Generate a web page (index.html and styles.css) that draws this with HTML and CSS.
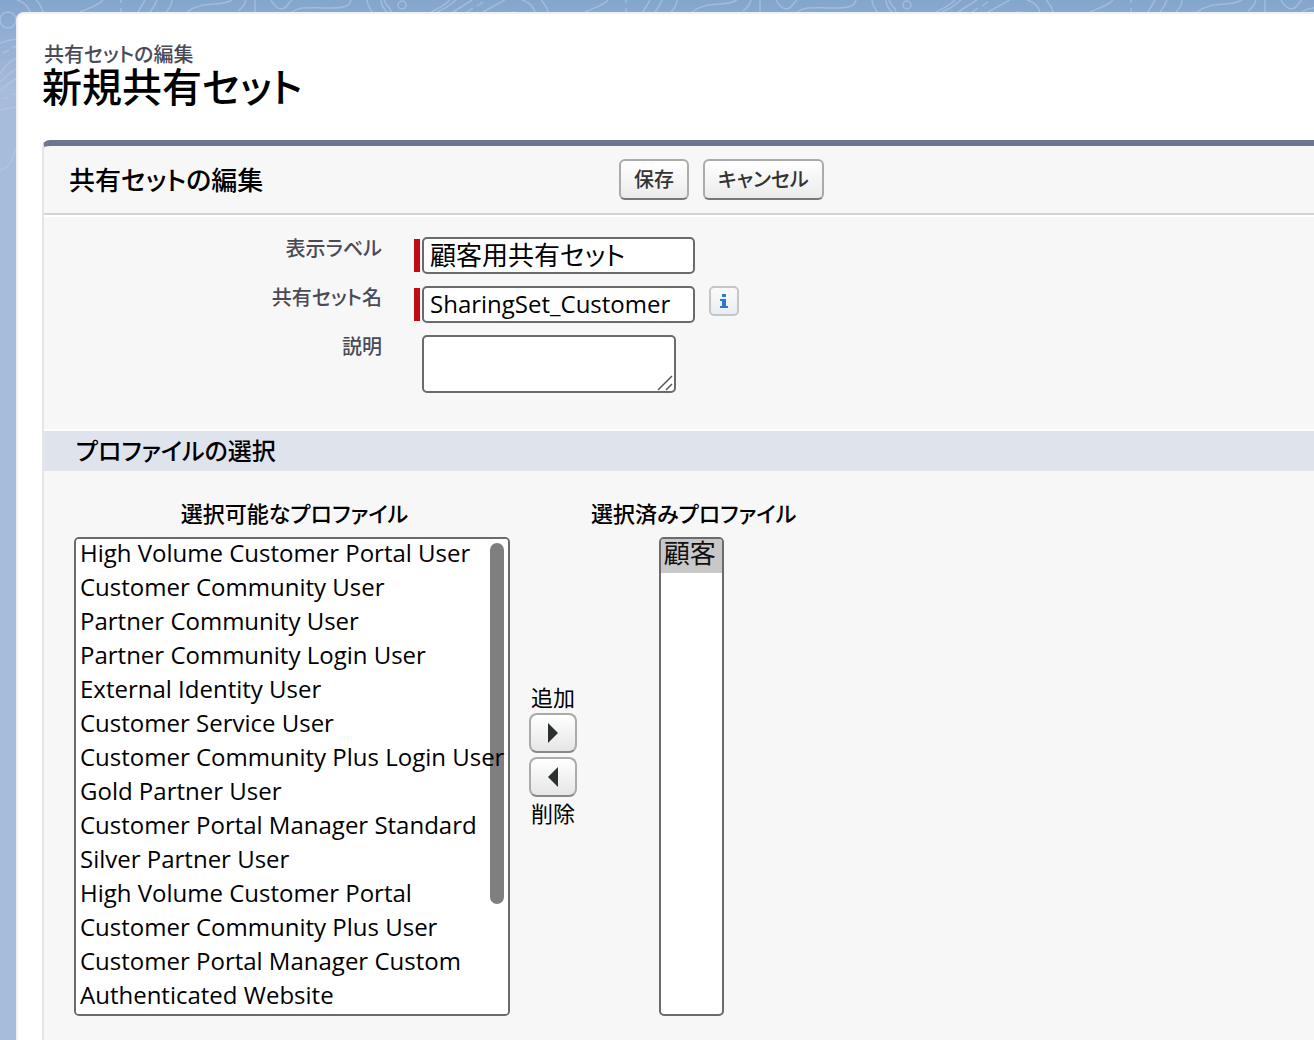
FILE: index.html
```html
<!DOCTYPE html>
<html lang="ja">
<head>
  <meta charset="utf-8">
  <meta name="viewport" content="width=device-width, initial-scale=1">
  <title>新規共有セット</title>
  <link rel="stylesheet" href="styles.css">
</head>
<body>
  <svg class="backdrop" aria-hidden="true">
    <defs>
      <pattern id="contours" width="505" height="200" patternUnits="userSpaceOnUse">
        <g fill="none" stroke="#b4cae4" stroke-opacity=".6" stroke-width="1.5">
          <path d="M17 0C24 2 28 6 30 12M36 0C40 4 42 8 43 12M80 12C88 8 98 6 103 0M121 0V3M121 8V12M138 12L145 0M150 12Q155 6 157 0M166 12Q172 6 172 0M187 12C203 0 217 8 232 0M238 11C246 5 244 4 246 0M255 0V12"/>
          <path d="M271 0C276 9 283 13 289 3L292 0M292 12C300 6 310 8 330 8C345 8 350 6 351 0M367 0C367 5 370 8 372 12M381 0C381 6 384 9 387 12M384 0C388 9 390 6 391 12"/>
          <ellipse cx="402" cy="5" rx="4" ry="4"/>
          <path d="M431 12Q444 6 450 0M437 12Q447 8 456 0M453 12L472 0M467 12L473 8M477 6L483 2M483 12L505 0"/>
          <circle cx="8" cy="20" r="8"/>
          <path d="M0 43Q8 40 17 39M3 53L9 50M12 48L17 46M0 74Q7 62 17 58M0 82Q8 74 17 68M0 91Q8 83 17 78M3 99L9 97M12 95L17 93M0 110Q8 108 17 107M0 170C12 168 12 156 17 147"/>
        </g>
      </pattern>
    </defs>
    <rect width="100%" height="200" fill="url(#contours)"/>
  </svg>

  <main class="page">
    <header class="page-title">
      <p class="page-type">共有セットの編集</p>
      <h1>新規共有セット</h1>
    </header>

    <form class="block">
      <div class="block-header">
        <h2>共有セットの編集</h2>
        <div class="actions">
          <button class="btn" type="submit">保存</button>
          <button class="btn" type="button">キャンセル</button>
        </div>
      </div>

      <div class="fields">
        <div class="field">
          <label for="label">表示ラベル</label>
          <div class="control required">
            <input class="text ja" id="label" type="text" value="顧客用共有セット">
          </div>
        </div>
        <div class="field">
          <label for="name">共有セット名</label>
          <div class="control required">
            <input class="text" id="name" type="text" value="SharingSet_Customer">
            <button class="info" type="button" aria-label="情報">
              <svg viewBox="0 0 10 16" width="10" height="16" aria-hidden="true">
                <path fill="#2a78d0" d="M3 1h4v3H3zM1 6h6v7h2v2H1v-2h2V8H1z"/>
              </svg>
            </button>
          </div>
        </div>
        <div class="field">
          <label for="description">説明</label>
          <div class="control">
            <div class="area">
              <textarea id="description"></textarea>
              <svg class="grip" viewBox="0 0 16 16" width="16" height="16" aria-hidden="true">
                <path d="M1 15L15 1M9 15L15 9" stroke="#555" stroke-width="1.5"/>
              </svg>
            </div>
          </div>
        </div>
      </div>

      <h3 class="section">プロファイルの選択</h3>

      <div class="picker">
        <div class="column available">
          <label for="available">選択可能なプロファイル</label>
          <div class="list-wrap">
            <select class="list" id="available" multiple size="14">
              <option>High Volume Customer Portal User</option>
              <option>Customer Community User</option>
              <option>Partner Community User</option>
              <option>Partner Community Login User</option>
              <option>External Identity User</option>
              <option>Customer Service User</option>
              <option>Customer Community Plus Login User</option>
              <option>Gold Partner User</option>
              <option>Customer Portal Manager Standard</option>
              <option>Silver Partner User</option>
              <option>High Volume Customer Portal</option>
              <option>Customer Community Plus User</option>
              <option>Customer Portal Manager Custom</option>
              <option>Authenticated Website</option>
            </select>
            <span class="thumb"></span>
          </div>
        </div>
        <div class="transfer">
          <span>追加</span>
          <button class="arrow" type="button" aria-label="追加">
            <svg viewBox="0 0 12 20" width="12" height="20" aria-hidden="true"><path fill="#2c302f" d="M1 0L11 10L1 20z"/></svg>
          </button>
          <button class="arrow" type="button" aria-label="削除">
            <svg viewBox="0 0 12 20" width="12" height="20" aria-hidden="true"><path fill="#2c302f" d="M11 0L1 10L11 20z"/></svg>
          </button>
          <span>削除</span>
        </div>
        <div class="column chosen">
          <label for="chosen">選択済みプロファイル</label>
          <select class="list ja" id="chosen" multiple size="14">
            <option selected>顧客</option>
          </select>
        </div>
      </div>
    </form>
  </main>
</body>
</html>
```
FILE: styles.css
```css
* {
  box-sizing: border-box;
}

body {
  margin: 0;
  padding: 12px 0 0 16px;
  min-height: 100vh;
  background: #a7bbda linear-gradient(#84a5cd, #a7bbda) 0 0 / 100% 90px no-repeat;
  font-family: "Open Sans", "Noto Sans CJK JP", sans-serif;
  font-feature-settings: "palt";
  color: #000;
}

h1, h2, h3, p {
  margin: 0;
}

button, input, select, textarea {
  font: inherit;
  font-feature-settings: inherit;
  color: inherit;
}

.backdrop {
  position: absolute;
  top: 0;
  left: 0;
  width: 100%;
  height: 200px;
}

.page {
  position: relative;
  min-height: calc(100vh - 12px);
  padding: 29px 0 0 24px;
  border: solid #f0f0f1;
  border-width: 2px 0 0 2px;
  border-radius: 8px 0 0 0;
  background: #fff;
}

.page-title {
  padding-bottom: 33px;
}

.page-type {
  padding-left: 2px;
  font-size: 20px;
  font-weight: 500;
  line-height: 24px;
  color: #4a4a56;
}

h1 {
  font-size: 40px;
  font-weight: 500;
  line-height: 40px;
}

.block {
  border: solid #e5e5e5;
  border-width: 6px 0 0 2px;
  border-top-color: #6b768f;
  border-radius: 8px 0 0 0;
  background: #f7f7f7;
}

.block-header {
  display: grid;
  grid-template-columns: 550px 1fr;
  align-items: center;
  padding: 13px 0 13px 25px;
  border-bottom: 2px solid #d4d4d4;
}

h2 {
  font-size: 26px;
  font-weight: 500;
  line-height: 40px;
}

.actions {
  display: flex;
  gap: 14px;
}

.btn {
  height: 41px;
  padding: 0 13px 2px;
  border: 2px solid #ababab;
  border-bottom-color: #777;
  border-radius: 6px;
  background: linear-gradient(#fff, #ebebeb);
  font-size: 20px;
  font-weight: 500;
  color: #333;
}

.fields {
  display: grid;
  gap: 12px;
  padding: 20px 0 36px;
  border: solid #fff;
  border-width: 2px 0;
}

.field {
  display: grid;
  grid-template-columns: 338px 1fr;
  column-gap: 40px;
}

.field label {
  text-align: right;
  font-size: 20px;
  font-weight: 500;
  line-height: 24px;
  color: #4a4a56;
}

.control {
  position: relative;
  display: flex;
  gap: 14px;
}

.required::before {
  content: "";
  position: absolute;
  left: -8px;
  top: 2px;
  bottom: 2px;
  width: 6px;
  background: #c20a14;
}

.text {
  width: 273px;
  height: 37px;
  padding: 0 6px 2px;
  border: 2px solid #6b6b6b;
  border-radius: 5px;
  background: #fff;
  font-size: 24px;
}

.text.ja {
  padding-bottom: 4px;
}

.info {
  display: grid;
  place-items: center;
  width: 30px;
  height: 30px;
  padding: 0;
  border: 2px solid #c6c6c6;
  border-radius: 5px;
  background: linear-gradient(#fbfbfb, #e9edf1);
}

.area {
  position: relative;
}

.area textarea {
  display: block;
  width: 254px;
  height: 58px;
  border: 2px solid #6b6b6b;
  border-radius: 5px;
  background: #fff;
  resize: none;
}

.grip {
  position: absolute;
  right: 3px;
  bottom: 2px;
}

.section {
  padding-left: 32px;
  background: #dfe3ec;
  font-size: 24px;
  font-weight: 500;
  line-height: 40px;
}

.picker {
  display: flex;
  padding: 28px 0 24px 30px;
}

.column {
  display: flex;
  flex-direction: column;
  align-items: center;
  gap: 10px;
}

.column label {
  padding-left: 5px;
  font-size: 22px;
  font-weight: 500;
  line-height: 28px;
  white-space: nowrap;
}

.list-wrap {
  position: relative;
}

.list {
  display: block;
  height: 479px;
  padding: 0;
  border: 2px solid #6b6b6b;
  border-radius: 5px;
  background: #fff;
  font-size: 24px;
  scrollbar-width: none;
}

.list option {
  height: 37px;
  margin-top: -3px;
  padding: 0 4px;
}

.list option:checked {
  background: #c8c8c8 linear-gradient(#c8c8c8, #c8c8c8);
}

.available .list {
  width: 436px;
}

.chosen .list {
  width: 65px;
}

.chosen option {
  height: 40px;
  margin-top: -6px;
  padding: 0 3px;
}

.ja {
  font-family: "Noto Sans CJK JP", sans-serif;
  font-size: 26px;
}

.thumb {
  position: absolute;
  top: 6px;
  right: 6px;
  width: 14px;
  height: 361px;
  border-radius: 7px;
  background: rgba(0, 0, 0, .5);
}

.transfer {
  display: flex;
  flex-direction: column;
  align-items: center;
  justify-content: center;
  gap: 4px;
  width: 48px;
  margin: 0 9px 0 19px;
  padding-bottom: 6px;
  font-size: 22px;
  line-height: 24px;
}

.arrow {
  display: grid;
  place-items: center;
  width: 48px;
  height: 40px;
  padding: 0;
  border: 2px solid #ababab;
  border-bottom-color: #888;
  border-radius: 8px;
  background: linear-gradient(#fff, #e6e6e6);
}
```
